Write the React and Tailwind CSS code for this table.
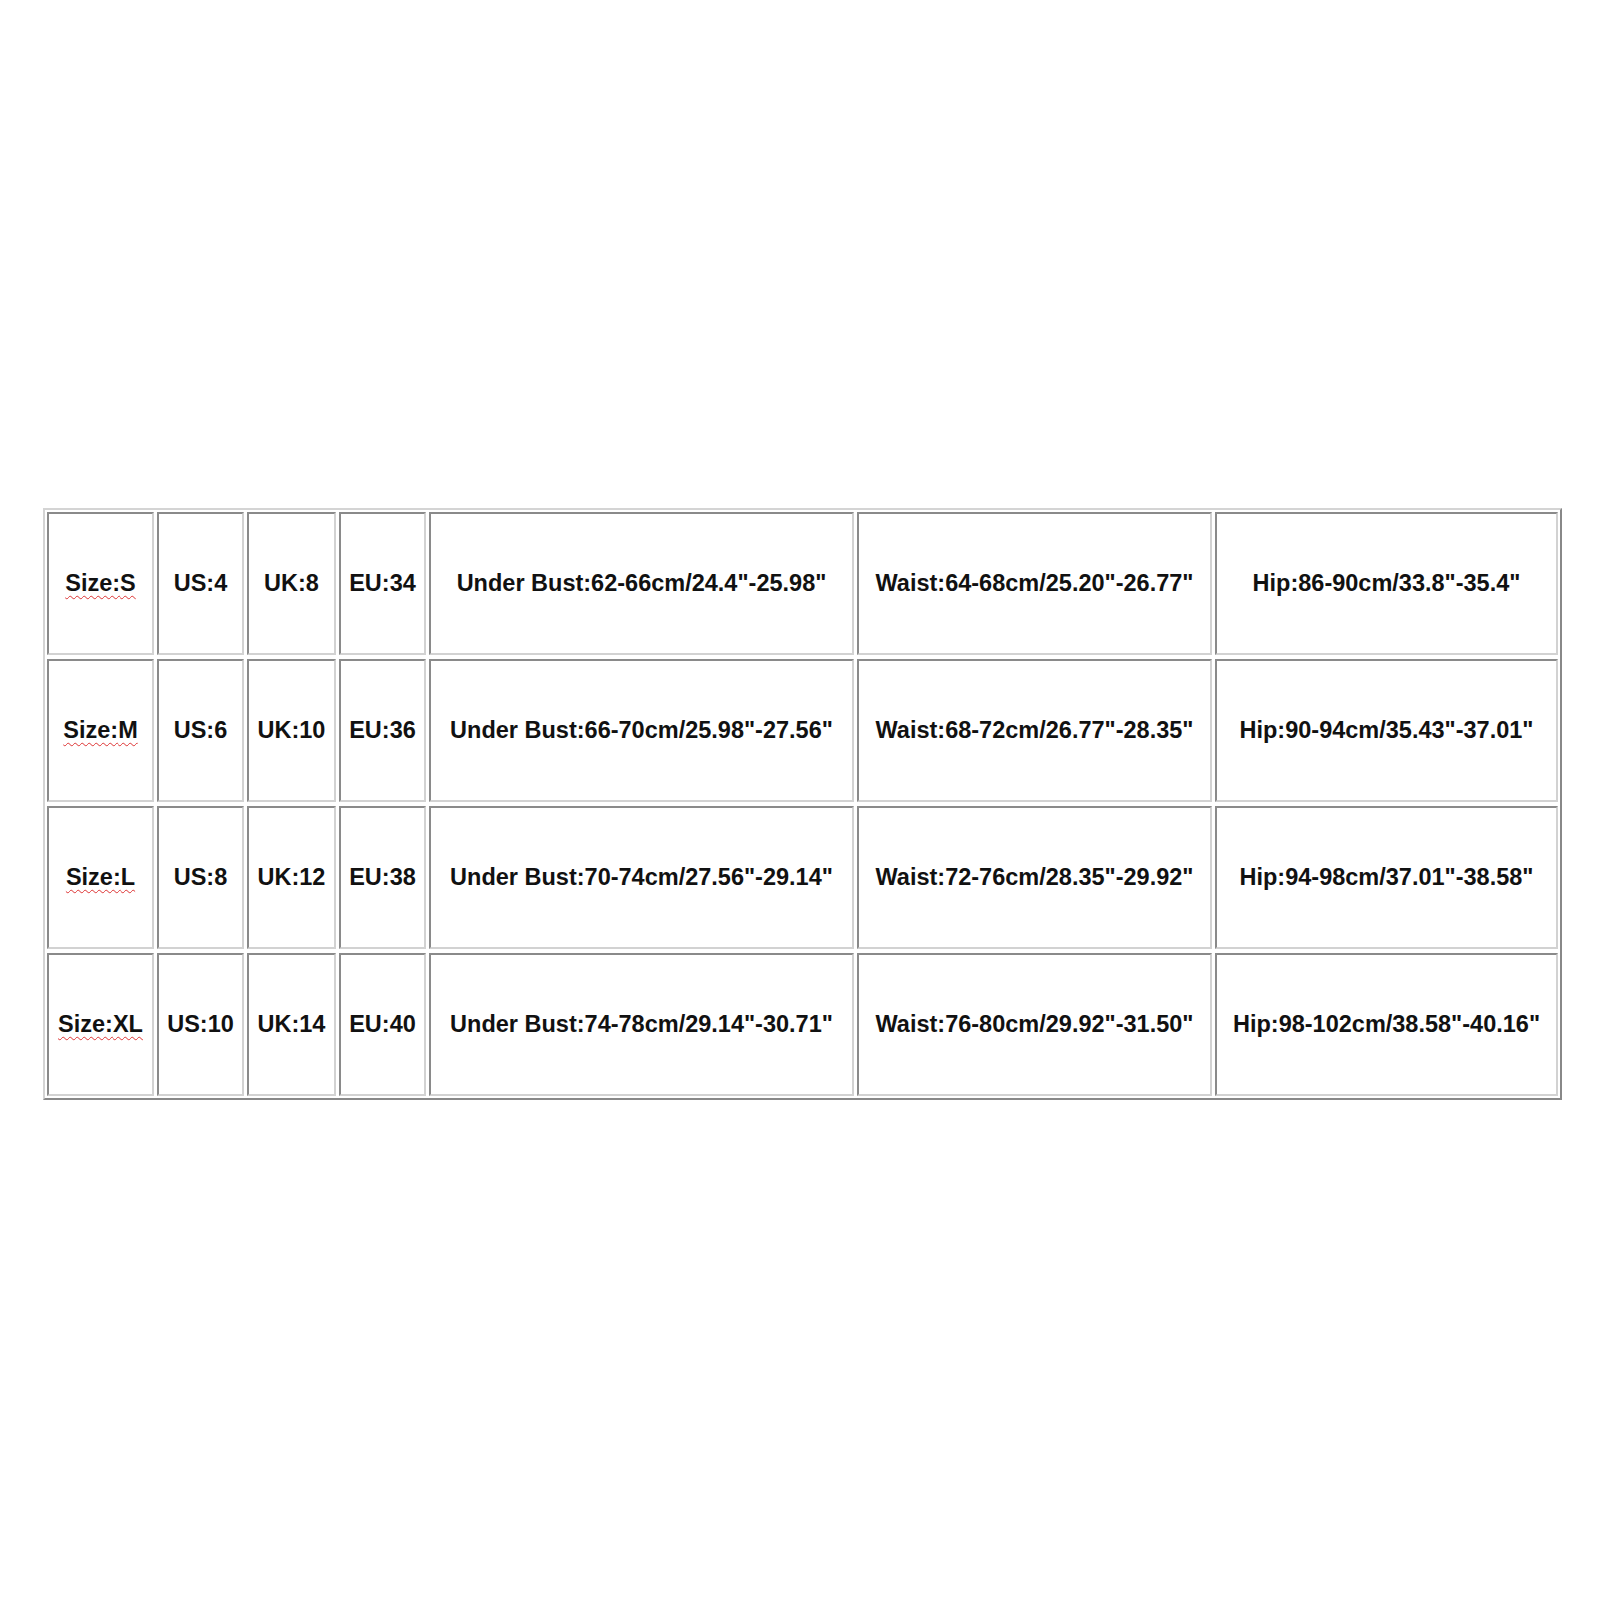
const rows = [
  ['S', 'US:4', 'UK:8', 'EU:34', 'Under Bust:62-66cm/24.4"-25.98"', 'Waist:64-68cm/25.20"-26.77"', 'Hip:86-90cm/33.8"-35.4"'],
  ['M', 'US:6', 'UK:10', 'EU:36', 'Under Bust:66-70cm/25.98"-27.56"', 'Waist:68-72cm/26.77"-28.35"', 'Hip:90-94cm/35.43"-37.01"'],
  ['L', 'US:8', 'UK:12', 'EU:38', 'Under Bust:70-74cm/27.56"-29.14"', 'Waist:72-76cm/28.35"-29.92"', 'Hip:94-98cm/37.01"-38.58"'],
  ['XL', 'US:10', 'UK:14', 'EU:40', 'Under Bust:74-78cm/29.14"-30.71"', 'Waist:76-80cm/29.92"-31.50"', 'Hip:98-102cm/38.58"-40.16"'],
]

function Cell({ children }) {
  return (
    <div className="flex items-center justify-center border-2 border-t-[#8a8a8a] border-l-[#8a8a8a] border-r-[#d2d2d2] border-b-[#d2d2d2] bg-white">
      {children}
    </div>
  )
}

export default function App() {
  return (
    <div className="w-[1600px] h-[1600px] bg-white pt-[508px] pl-[43px] font-['Liberation_Sans',Arial,sans-serif] font-bold text-[23.5px] text-[#111]">
      <div className="w-[1519px] border-2 border-t-[#d4d4d4] border-l-[#d4d4d4] border-r-[#888] border-b-[#888] p-[2px] grid grid-cols-[107px_87px_89px_87px_425px_355px_343px] auto-rows-[143px] gap-x-[3px] gap-y-[4px]">
        {rows.map((r) => (
          <>
            <Cell key={r[0] + 's'}>
              <span className="underline decoration-wavy decoration-[#d33] decoration-1 underline-offset-[4px]">
                Size:{r[0]}
              </span>
            </Cell>
            {r.slice(1).map((t, i) => (
              <Cell key={r[0] + i}>{t}</Cell>
            ))}
          </>
        ))}
      </div>
    </div>
  )
}
